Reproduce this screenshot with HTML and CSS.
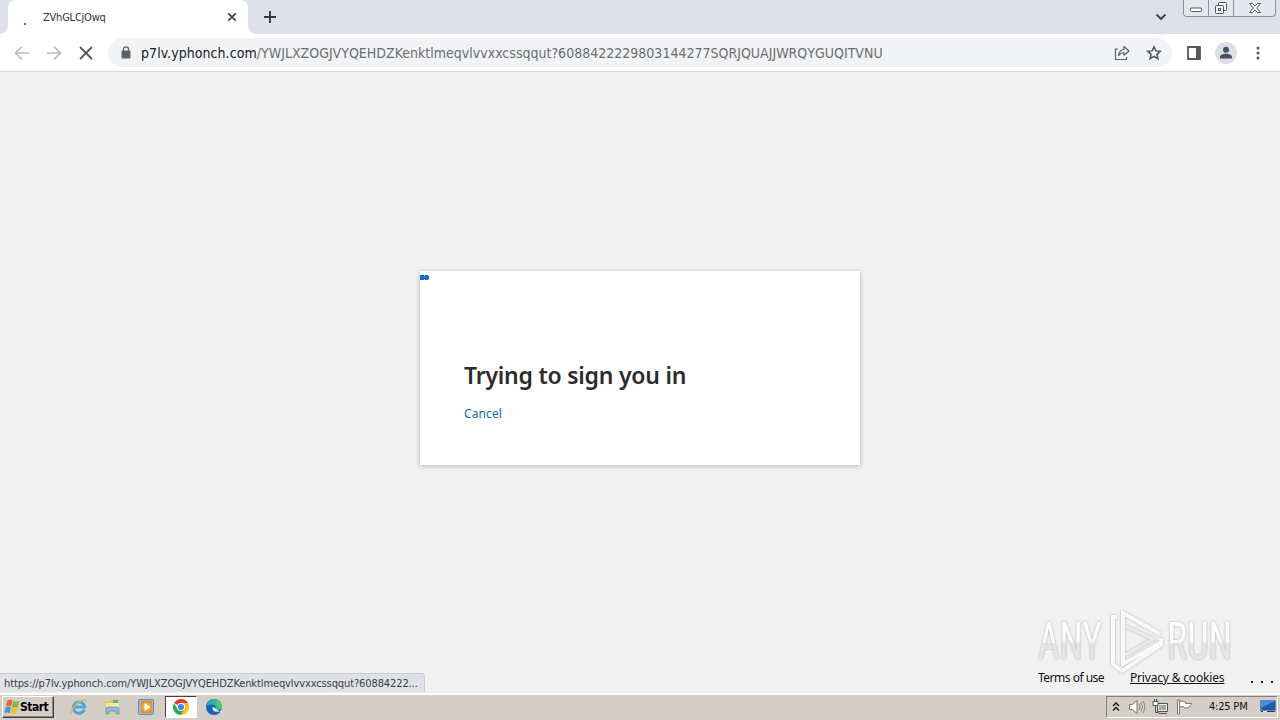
FILE: index.html
```html
<!DOCTYPE html>
<html lang="en">
<head>
<meta charset="utf-8">
<title>ZVhGLCjOwq</title>
<link rel="stylesheet" href="styles.css">
</head>
<body>
<div class="screen">
  <header class="tabstrip">
    <div class="tab"><i class="throbber"></i><span class="tab-title">ZVhGLCjOwq</span>
      <svg class="tab-close" width="10" height="10" viewBox="0 0 10 10"><path d="M1.300 1.300l7.400 7.400M8.700 1.300L1.300 8.700" stroke="#3c4043" stroke-width="1.700"/></svg>
    </div>
    <svg class="new-tab" width="14" height="14" viewBox="0 0 14 14"><path d="M7 1v12M1 7h12" stroke="#34373c" stroke-width="1.900"/></svg>
    <svg class="tab-search" width="12" height="8" viewBox="0 0 12 8"><path d="M1.500 1.500L6 6l4.500-4.500" fill="none" stroke="#3c4043" stroke-width="1.900"/></svg>
    <div class="window-buttons">
      <span class="wb wb-min"><svg width="14" height="6" viewBox="0 0 14 6"><rect x="1.500" y="1" width="11" height="3.500" rx="1" fill="#fff" stroke="#555b66"/></svg></span>
      <span class="wb wb-restore"><svg width="14" height="14" viewBox="0 0 14 14"><g fill="#f5f6f8" stroke="#4f5561"><rect x="4.500" y="1.500" width="8" height="8" rx="1"/><rect x="1.500" y="4.500" width="8" height="8" rx="1"/><rect x="4.500" y="7.500" width="2" height="2"/></g></svg></span>
      <span class="wb wb-close"><svg width="14" height="12" viewBox="0 0 14 12"><path d="M1.500 1.500h3L7 4l2.500-2.500h3L8.800 6l3.700 4.500h-3L7 8l-2.500 2.500h-3L5.200 6z" fill="#fff" stroke="#555b66"/></svg></span>
    </div>
  </header>
  <div class="toolbar">
    <svg class="nav" width="96" height="16" viewBox="0 0 96 16" fill="none"><path d="M15 8H2M8 1.500L1.500 8 8 14.500M33 8h13M40 1.500L46.500 8 40 14.500" stroke="#b8babd" stroke-width="1.700"/><path d="M66 2l12 12M78 2L66 14" stroke="#55585d" stroke-width="1.800"/></svg>
    <div class="omnibox">
      <svg class="lock" width="10" height="13" viewBox="0 0 10 13"><rect x=".5" y="4.500" width="9" height="8" rx="1" fill="#5f6368"/><path d="M2.500 5V3.300a2.500 2.500 0 015 0V5" fill="none" stroke="#5f6368" stroke-width="1.300"/></svg>
      <span class="url"><span class="host">p7lv.yphonch.com</span><span class="path">/YWJLXZOGJVYQEHDZKenktlmeqvlvvxxcssqqut?6088422229803144277SQRJQUAJJWRQYGUQITVNU</span></span>
      <svg class="share" width="16" height="16" viewBox="0 0 16 16" fill="none" stroke="#5f6368" stroke-width="1.200"><path d="M4 4H1.500v10.500h11V12"/><path d="M4.500 10.500C5 7 7 4.600 10 4.500V1.500L15 6l-5 4.200V7.500C7.500 7.500 6 8.700 4.500 10.500z" stroke-linejoin="round"/></svg>
      <svg class="star" width="16" height="16" viewBox="0 0 16 16"><path d="M8 1.800l1.850 4.100 4.450.45-3.350 3 .98 4.400L8 11.450 4.070 13.750l.98-4.400-3.350-3 4.450-.45z" fill="none" stroke="#50545a" stroke-width="1.500"/></svg>
    </div>
    <svg class="panel" width="14" height="14" viewBox="0 0 14 14"><path d="M1 1h12v12H1z" fill="#fff" stroke="#55585d" stroke-width="1.800"/><path d="M9 1h4v12H9z" fill="#55585d"/></svg>
    <svg class="avatar" width="22" height="22" viewBox="0 0 22 22"><circle cx="11" cy="11" r="11" fill="#dcdfe5"/><circle cx="11" cy="7.800" r="3" fill="#465066"/><path d="M5 16.500v-1.700c0-2 3.600-3 6-3s6 1 6 3v1.700z" fill="#465066"/></svg>
    <svg class="more" width="4" height="14" viewBox="0 0 4 14" fill="#505358"><circle cx="2" cy="2" r="1.500"/><circle cx="2" cy="7" r="1.500"/><circle cx="2" cy="12" r="1.500"/></svg>
  </div>
  <main class="page">
    <section class="card">
      <i class="dots"></i>
      <h1><span>Trying to sign you in</span></h1>
      <a class="cancel">Cancel</a>
    </section>
    <div class="watermark">
      <svg width="220" height="68" viewBox="0 0 220 68">
        <defs><linearGradient id="wm" x1="0" y1="0" x2="0" y2="1"><stop offset="0" stop-color="#fff"/><stop offset=".5" stop-color="#fafafa"/><stop offset=".54" stop-color="#e4e4e4"/><stop offset="1" stop-color="#e9e9e9"/></linearGradient>
        <filter id="halo" x="-10%" y="-20%" width="120%" height="140%"><feDropShadow dx="0" dy="0" stdDeviation="1.300" flood-color="#888" flood-opacity=".7"/></filter></defs>
        <g filter="url(#halo)">
          <text class="wm-text" x="2" y="51" textLength="64" lengthAdjust="spacingAndGlyphs">ANY</text>
          <text class="wm-text" x="131" y="51" textLength="65" lengthAdjust="spacingAndGlyphs">RUN</text>
          <g fill="none" stroke="#f8f8f8" stroke-width="4"><path d="M124 35L87 56V5l37 21"/><path d="M81 9h-4v47l9 7 39-26V30"/></g>
          <path d="M89 18l28 13-28 16" fill="none" stroke="#ebebeb" stroke-width="3"/>
        </g>
      </svg>
    </div>
    <footer class="links"><a class="terms">Terms of use</a><a class="privacy">Privacy &amp; cookies</a><span class="ellipsis"><i></i><i></i><i></i></span></footer>
    <div class="status"><span>https://p7lv.yphonch.com/YWJLXZOGJVYQEHDZKenktlmeqvlvvxxcssqqut?60884222...</span></div>
  </main>
  <footer class="taskbar">
    <div class="start"><svg width="16" height="16" viewBox="0 0 16 16"><path d="M3.500 1.500q2.500-1.300 5 0L7.300 7.300q-2.500-1.200-5.300 0z" fill="#ec6534"/><path d="M9.200 2q2.500 1.200 6.300 0L14 8q-3 1-6 0z" fill="#82b83e"/><path d="M1.700 8.200q2.500-1.200 5.200 0l-1.200 5.800q-2.500-1-5.500 0z" fill="#459ad8"/><path d="M7.700 8.700q2.500 1.200 6 0L12.200 14.500q-2.700 1-6-.3z" fill="#f3bd2e"/></svg><b>Start</b></div>
    <svg class="app" width="32" height="22" viewBox="0 0 32 22"><path d="M21.300 13.500a5.600 5.600 0 11.300-2.500H11" fill="none" stroke="#48a9df" stroke-width="3"/><path d="M9 17.500C5 20 10 9 18 5c6-3 6-.5 4.500 2" fill="none" stroke="#e9b93a" stroke-width="1.300"/></svg>
    <svg class="app" width="32" height="22" viewBox="0 0 32 22"><path d="M8 5h5l1-1h6l2 2v11H8z" fill="#e8c765"/><path d="M9 7h13v7H9z" fill="#fae99d"/><path d="M16 4h5v3h-5z" fill="#6fae80"/><path d="M9 18v-5q0-2 2-2h9q2 0 2 2v5h-3v-3h-7v3z" fill="#83bdda" stroke="#5b9abf" stroke-width=".7"/></svg>
    <svg class="app" width="32" height="22" viewBox="0 0 32 22"><rect x="7.500" y="3.500" width="15" height="15" rx="1" fill="#94bbda" stroke="#5f8fb9"/><rect x="10" y="5" width="11" height="12" fill="#f28a17"/><circle cx="15.500" cy="11" r="5" fill="#f5a333"/><path d="M13.500 7l6 4-6 4z" fill="#fff"/></svg>
    <div class="active-app"><svg width="18" height="18" viewBox="0 0 18 18"><circle cx="9" cy="9" r="8" fill="#fff"/><path d="M9 9L2.070 5A8 8 0 0115.930 5H9z" fill="#e33b2e"/><path d="M15.930 5A8 8 0 019 17l3.460-6L9 5z" fill="#fbc116"/><path d="M2.070 5A8 8 0 009 17l3.460-6-6.920 0z" fill="#2da94f"/><circle cx="9" cy="9" r="4" fill="#fff"/><circle cx="9" cy="9" r="3.100" fill="#4285f4"/></svg></div>
    <svg class="app" width="34" height="22" viewBox="0 0 34 22"><defs><linearGradient id="edge" x1="0" y1="0" x2="1" y2="0"><stop stop-color="#1598d9"/><stop offset="1" stop-color="#58cf68"/></linearGradient></defs><circle cx="17" cy="11" r="8" fill="#1265b8"/><path d="M9 11a8 8 0 0116 0c0 3-5 4-7 2 2-2 0-4.500-3-4.500-3.500 0-6 1-6 2.500z" fill="url(#edge)"/><path d="M16 10.500c-2 5 3 6.500 7.500 4.500l1.500-2v3h-2z" fill="#d4e9f0"/></svg>
    <div class="tray">
      <svg class="chevrons" width="8" height="10" viewBox="0 0 8 10"><path d="M1 4l3-3 3 3M1 8.500l3-3 3 3" fill="none" stroke="#111" stroke-width="1.300"/></svg>
      <svg class="speaker" width="18" height="16" viewBox="0 0 18 16"><path d="M1.500 5.500h3L9 1.500v13l-4.500-4h-3z" fill="#fff" stroke="#777"/><path d="M11 5q2 3 0 6M13 3.500q3 4.500 0 9M15 2q3.500 6 0 12" fill="none" stroke="#888"/></svg>
      <svg class="network" width="17" height="16" viewBox="0 0 17 16"><path d="M5.500 4.500h10v8h-10z" fill="#aaa" stroke="#555"/><path d="M6.500 5.500h8v6h-8z" fill="none" stroke="#eee"/><path d="M7 14.500h8" stroke="#555"/><path d="M1 2.500h5v4H1z" fill="#fff" stroke="#555"/><path d="M2.500 0v3M4.500 0v3M3.500 7v6.500H7" fill="none" stroke="#555"/></svg>
      <svg class="flag" width="17" height="16" viewBox="0 0 17 16"><path d="M3.500 2.500q3-1 6 .5v1.500h6q-2 5-7 4.500l-1-1.500-4 .5" fill="#fff" stroke="#777"/><path d="M1.500 1h2v14h-2z" fill="#fff" stroke="#777"/></svg>
      <span class="clock">4:25 PM</span>
      <svg class="desktop" width="16" height="13" viewBox="0 0 16 13"><path d="M.5.500h15v10H.5z" fill="#235bac" stroke="#678ab3"/><path d="M1 1h14L1 8z" fill="#4b8bdc"/><path d="M1 11.500h14" stroke="#253e60"/><path d="M3 11.500h4" stroke="#e6eef6"/></svg>
    </div>
  </footer>
</div>
</body>
</html>
```
FILE: styles.css
```css
* { box-sizing: border-box; }
body { margin: 0; overflow: hidden; }
svg { display: block; flex: none; }
.screen { width: 1280px; height: 720px; display: flex; flex-direction: column; font-family: "DejaVu Sans Condensed", "DejaVu Sans", sans-serif; font-stretch: condensed; background: #f1f1f1; }
.tabstrip { height: 34px; display: flex; background: #dee1e8; flex: none; }
.tab { width: 240px; height: 34px; margin-left: 8px; background: #fff; border-radius: 7px 7px 0 0; display: flex; align-items: center; position: relative; }
.tab::before, .tab::after { content: ""; position: absolute; bottom: 0; width: 8px; height: 8px; }
.tab::before { left: -8px; background: radial-gradient(circle at 0 0, transparent 7.5px, #fff 8px); }
.tab::after { right: -8px; background: radial-gradient(circle at 100% 0, transparent 7.5px, #fff 8px); }
.throbber { width: 2px; height: 2px; margin: 13px 0 0 16px; background: #3d78c7; }
.tab-title { width: 64px; margin-left: 17px; font-size: 11px; letter-spacing: -.22px; white-space: nowrap; color: #333; }
.tab-close { margin: 0 0 0 120px; }
.new-tab { margin: 10px 0 0 15px; }
.tab-search { margin: 13px 0 0 auto; }
.window-buttons { display: flex; width: 93px; height: 17px; margin: 0 4px 0 16px; border: 1px solid #8b919d; border-top: 0; border-radius: 0 0 4px 4px; background: #e4e7ed; }
.wb { display: flex; align-items: center; justify-content: center; border-right: 1px solid #8b919d; }
.wb-min { width: 25px; padding-top: 4px; }
.wb-restore { width: 25px; }
.wb-close { width: 41px; border: 0; }
.toolbar { height: 38px; flex: none; display: flex; align-items: center; background: #fff; border-bottom: 1px solid #dadada; }
.nav { margin-left: 14px; }
.omnibox { display: flex; align-items: center; width: 1064px; height: 29px; margin-left: -2px; border-radius: 15px; background: #f1f3f5; }
.lock { margin-left: 13px; }
.url { width: 760px; margin-left: 10px; font-size: 14px; line-height: 20px; white-space: nowrap; color: #202124; }
.host { letter-spacing: .06px; }
.path { color: #6a6e73; letter-spacing: .01px; }
.share { margin-left: auto; }
.star { margin: 0 10px 0 16px; }
.panel { margin-left: 15px; }
.avatar { margin-left: 14px; }
.more { margin-left: 19px; }
.page { height: 621px; flex: none; position: relative; display: flex; flex-direction: column; align-items: center; background: #f1f1f1; font-family: "Noto Sans", sans-serif; }
.card { width: 440px; height: 194px; margin-top: 199px; padding: 84px 44px 0; position: relative; background: #fff; box-shadow: 0 1px 5px rgba(0,0,0,.25); }
.dots { position: absolute; left: 0; top: 4px; width: 9px; height: 5px; background: radial-gradient(circle at 2px 2.5px, #1672bd 2.5px, transparent 3px), radial-gradient(circle at 6.5px 2.5px, #1672bd 2.5px, transparent 3px); }
h1 { margin: 0; font-size: 23px; line-height: 40px; font-weight: 600; letter-spacing: -.24px; color: #2c2c2c; white-space: nowrap; }
.cancel { display: block; margin-top: 9px; font-size: 12px; line-height: 20px; letter-spacing: .1px; color: #1369a8; }
.watermark { position: absolute; left: 1036px; top: 536px; }
.wm-text { font-family: Roboto, sans-serif; font-size: 52px; fill: url(#wm); }
.links { position: absolute; left: 1038px; top: 596px; display: flex; width: 235px; font-size: 12px; line-height: 20px; color: #111; white-space: nowrap; }
.terms { width: 92px; letter-spacing: -.5px; }
.privacy { text-decoration: underline; letter-spacing: -.18px; }
.ellipsis { display: flex; gap: 8px; margin: 13px 0 0 auto; }
.ellipsis i { width: 2px; height: 2px; background: #222; }
.status { position: absolute; left: 0; bottom: 1px; width: 425px; height: 19px; padding-left: 4px; border: solid #c9ccd2; border-width: 1px 1px 0 0; border-radius: 0 4px 0 0; background: #dee1e6; color: #3c4045; font: 11px/19px "DejaVu Sans Condensed", sans-serif; letter-spacing: -.11px; white-space: nowrap; }
.taskbar { height: 27px; flex: none; display: flex; align-items: center; padding-bottom: 2px; border-top: 2px solid #fff; background: #d4cec6; }
.start { width: 52px; height: 22px; margin: 0 9px 0 2px; padding-left: 1px; display: flex; align-items: center; border: 1px solid; border-color: #fff #404040 #404040 #fff; box-shadow: inset -1px -1px #888; font-size: 12px; letter-spacing: -.5px; color: #000; }
.app { margin-right: 2px; }
.app + .active-app { margin-right: 0; }
.active-app { width: 32px; height: 22px; display: flex; align-items: center; justify-content: center; border: 1px solid; border-color: #404040 #fff #fff #404040; background: #fff; }
.tray { width: 172px; height: 22px; margin: 0 2px 0 auto; padding-left: 5px; display: flex; align-items: center; border: 1px solid; border-color: #858078 #fff #fff #858078; }
.speaker { margin-left: 8px; }
.network { margin-left: 6px; }
.flag { margin-left: 7px; }
.clock { width: 51px; margin-left: 16px; font-size: 11px; letter-spacing: -.2px; white-space: nowrap; color: #111; }
```
